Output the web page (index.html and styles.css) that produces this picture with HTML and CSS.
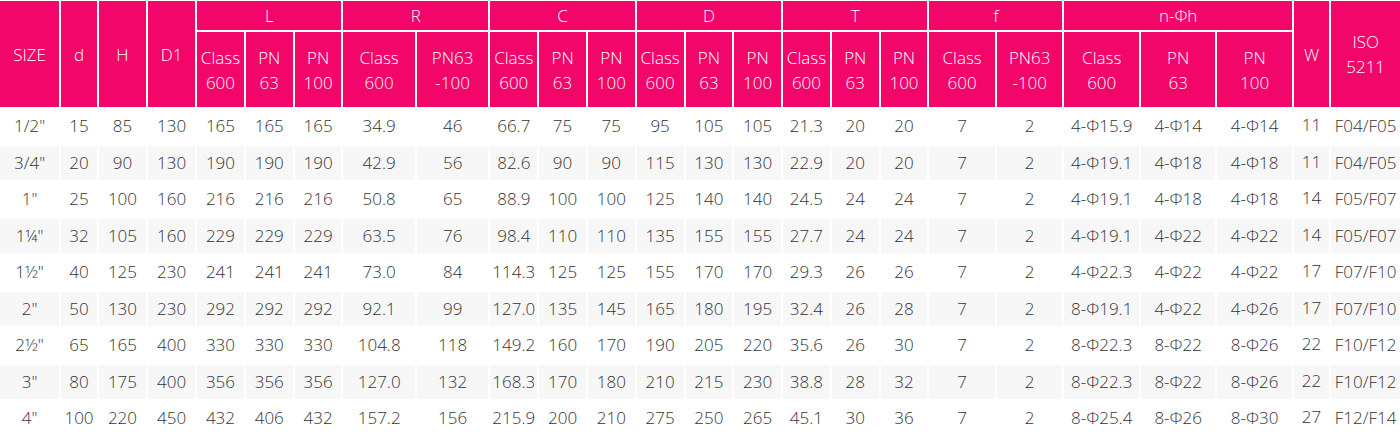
FILE: index.html
```html
<!DOCTYPE html>
<html>
<head>
<meta charset="utf-8">
<link rel="stylesheet" href="styles.css">
</head>
<body>
<table class="spec">
  <colgroup>
    <col class="c-size"><col class="c-d"><col class="c-h"><col class="c-d1">
    <col class="c-n"><col class="c-n"><col class="c-n">
    <col class="c-r"><col class="c-r">
    <col class="c-n"><col class="c-n"><col class="c-n">
    <col class="c-n"><col class="c-n"><col class="c-n">
    <col class="c-n"><col class="c-n"><col class="c-n">
    <col class="c-f"><col class="c-f">
    <col class="c-h2"><col class="c-h2"><col class="c-h2">
    <col class="c-w"><col class="c-iso">
  </colgroup>
  <thead>
    <tr class="top">
      <th rowspan="2">SIZE</th>
      <th rowspan="2">d</th>
      <th rowspan="2">H</th>
      <th rowspan="2">D1</th>
      <th colspan="3">L</th>
      <th colspan="2">R</th>
      <th colspan="3">C</th>
      <th colspan="3">D</th>
      <th colspan="3">T</th>
      <th colspan="2">f</th>
      <th colspan="3">n-Φh</th>
      <th rowspan="2">W</th>
      <th rowspan="2">ISO<br>5211</th>
    </tr>
    <tr class="sub">
      <th>Class<br>600</th><th>PN<br>63</th><th>PN<br>100</th>
      <th>Class<br>600</th><th>PN63<br>-100</th>
      <th>Class<br>600</th><th>PN<br>63</th><th>PN<br>100</th>
      <th>Class<br>600</th><th>PN<br>63</th><th>PN<br>100</th>
      <th>Class<br>600</th><th>PN<br>63</th><th>PN<br>100</th>
      <th>Class<br>600</th><th>PN63<br>-100</th>
      <th>Class<br>600</th><th>PN<br>63</th><th>PN<br>100</th>
    </tr>
  </thead>
  <tbody>
    <tr><td>1/2"</td><td>15</td><td>85</td><td>130</td><td>165</td><td>165</td><td>165</td><td>34.9</td><td>46</td><td>66.7</td><td>75</td><td>75</td><td>95</td><td>105</td><td>105</td><td>21.3</td><td>20</td><td>20</td><td>7</td><td>2</td><td>4-Φ15.9</td><td>4-Φ14</td><td>4-Φ14</td><td class="w">11</td><td>F04/F05</td></tr>
    <tr><td>3/4"</td><td>20</td><td>90</td><td>130</td><td>190</td><td>190</td><td>190</td><td>42.9</td><td>56</td><td>82.6</td><td>90</td><td>90</td><td>115</td><td>130</td><td>130</td><td>22.9</td><td>20</td><td>20</td><td>7</td><td>2</td><td>4-Φ19.1</td><td>4-Φ18</td><td>4-Φ18</td><td class="w">11</td><td>F04/F05</td></tr>
    <tr><td>1"</td><td>25</td><td>100</td><td>160</td><td>216</td><td>216</td><td>216</td><td>50.8</td><td>65</td><td>88.9</td><td>100</td><td>100</td><td>125</td><td>140</td><td>140</td><td>24.5</td><td>24</td><td>24</td><td>7</td><td>2</td><td>4-Φ19.1</td><td>4-Φ18</td><td>4-Φ18</td><td class="w">14</td><td>F05/F07</td></tr>
    <tr><td>1¼"</td><td>32</td><td>105</td><td>160</td><td>229</td><td>229</td><td>229</td><td>63.5</td><td>76</td><td>98.4</td><td>110</td><td>110</td><td>135</td><td>155</td><td>155</td><td>27.7</td><td>24</td><td>24</td><td>7</td><td>2</td><td>4-Φ19.1</td><td>4-Φ22</td><td>4-Φ22</td><td class="w">14</td><td>F05/F07</td></tr>
    <tr><td>1½"</td><td>40</td><td>125</td><td>230</td><td>241</td><td>241</td><td>241</td><td>73.0</td><td>84</td><td>114.3</td><td>125</td><td>125</td><td>155</td><td>170</td><td>170</td><td>29.3</td><td>26</td><td>26</td><td>7</td><td>2</td><td>4-Φ22.3</td><td>4-Φ22</td><td>4-Φ22</td><td class="w">17</td><td>F07/F10</td></tr>
    <tr><td>2"</td><td>50</td><td>130</td><td>230</td><td>292</td><td>292</td><td>292</td><td>92.1</td><td>99</td><td>127.0</td><td>135</td><td>145</td><td>165</td><td>180</td><td>195</td><td>32.4</td><td>26</td><td>28</td><td>7</td><td>2</td><td>8-Φ19.1</td><td>4-Φ22</td><td>4-Φ26</td><td class="w">17</td><td>F07/F10</td></tr>
    <tr><td>2½"</td><td>65</td><td>165</td><td>400</td><td>330</td><td>330</td><td>330</td><td>104.8</td><td>118</td><td>149.2</td><td>160</td><td>170</td><td>190</td><td>205</td><td>220</td><td>35.6</td><td>26</td><td>30</td><td>7</td><td>2</td><td>8-Φ22.3</td><td>8-Φ22</td><td>8-Φ26</td><td class="w">22</td><td>F10/F12</td></tr>
    <tr><td>3"</td><td>80</td><td>175</td><td>400</td><td>356</td><td>356</td><td>356</td><td>127.0</td><td>132</td><td>168.3</td><td>170</td><td>180</td><td>210</td><td>215</td><td>230</td><td>38.8</td><td>28</td><td>32</td><td>7</td><td>2</td><td>8-Φ22.3</td><td>8-Φ22</td><td>8-Φ26</td><td class="w">22</td><td>F10/F12</td></tr>
    <tr><td>4"</td><td>100</td><td>220</td><td>450</td><td>432</td><td>406</td><td>432</td><td>157.2</td><td>156</td><td>215.9</td><td>200</td><td>210</td><td>275</td><td>250</td><td>265</td><td>45.1</td><td>30</td><td>36</td><td>7</td><td>2</td><td>8-Φ25.4</td><td>8-Φ26</td><td>8-Φ30</td><td class="w">27</td><td>F12/F14</td></tr>
  </tbody>
</table>
</body>
</html>
```
FILE: styles.css
```css
html, body {
  margin: 0;
  padding: 0;
  background: #ffffff;
}

body {
  font-family: "Open Sans", "Noto Sans", "DejaVu Sans", sans-serif;
  overflow: hidden;
}

.spec {
  table-layout: fixed;
  border-collapse: separate;
  border-spacing: 2px;
  width: 1404px;
  margin: -1px 0 0 -2px;
  font-size: 17px;
  font-weight: 350;
  text-align: center;
}

.c-size { width: 59px; }
.c-d { width: 35.7px; }
.c-h { width: 47px; }
.c-d1 { width: 47px; }
.c-n { width: 46.7px; }
.c-r { width: 71.3px; }
.c-f { width: 65.4px; }
.c-h2 { width: 74.3px; }
.c-w { width: 35.4px; }
.c-iso { width: 68.3px; }

.spec th {
  background: #f2066a;
  color: #ffffff;
  font-weight: 350;
  padding: 0;
  line-height: 25px;
  white-space: nowrap;
  overflow: hidden;
}

.spec .top th {
  height: 29px;
}

.spec .sub th {
  height: 75px;
}

.spec td {
  color: #333333;
  height: 34.5px;
  padding: 0;
  white-space: nowrap;
  line-height: 20px;
}

.spec tbody tr:nth-child(even) td {
  background: #f7f7f7;
}

.spec td.w {
  vertical-align: top;
  padding-top: 6px;
  height: 28.5px;
}
```
